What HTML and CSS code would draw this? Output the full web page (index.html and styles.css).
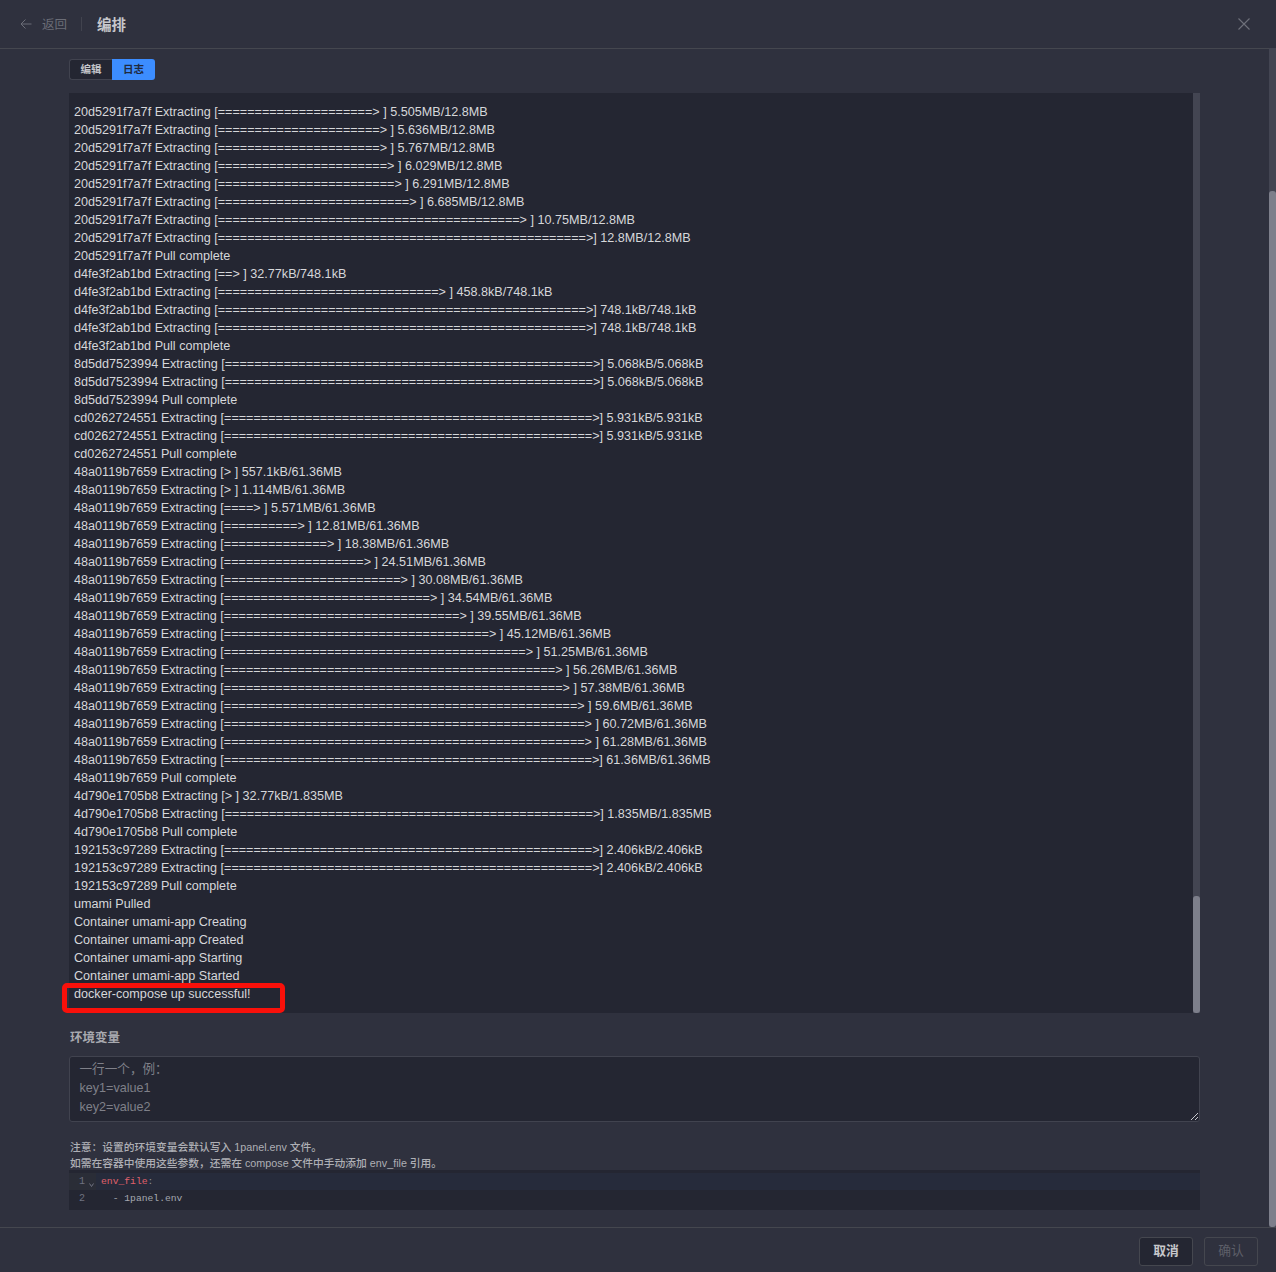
FILE: index.html
```html
<!DOCTYPE html>
<html lang="zh">
<head>
<meta charset="utf-8">
<title>编排</title>
<link rel="stylesheet" href="styles.css">
</head>
<body>
<div class="drawer">
  <header class="head">
    <svg class="back-icon" viewBox="0 0 12 12" width="12" height="12"><path d="M11.5 6H1M5.5 1.5 1 6l4.5 4.5" fill="none" stroke="currentColor" stroke-width="1"/></svg>
    <span class="back-text">返回</span>
    <span class="head-divider"></span>
    <span class="head-title">编排</span>
    <svg class="close-icon" viewBox="0 0 12 12" width="12" height="12"><path d="M.5.5l11 11M11.5.5l-11 11" fill="none" stroke="currentColor" stroke-width="1.1"/></svg>
  </header>
  <main class="body">
    <div class="tabs"><span class="tab">编辑</span><span class="tab tab-active">日志</span></div>
    <div class="log-wrap">
<pre class="log">20d5291f7a7f Extracting [=====================&gt; ] 5.505MB/12.8MB
20d5291f7a7f Extracting [======================&gt; ] 5.636MB/12.8MB
20d5291f7a7f Extracting [======================&gt; ] 5.767MB/12.8MB
20d5291f7a7f Extracting [=======================&gt; ] 6.029MB/12.8MB
20d5291f7a7f Extracting [========================&gt; ] 6.291MB/12.8MB
20d5291f7a7f Extracting [==========================&gt; ] 6.685MB/12.8MB
20d5291f7a7f Extracting [=========================================&gt; ] 10.75MB/12.8MB
20d5291f7a7f Extracting [==================================================&gt;] 12.8MB/12.8MB
20d5291f7a7f Pull complete
d4fe3f2ab1bd Extracting [==&gt; ] 32.77kB/748.1kB
d4fe3f2ab1bd Extracting [==============================&gt; ] 458.8kB/748.1kB
d4fe3f2ab1bd Extracting [==================================================&gt;] 748.1kB/748.1kB
d4fe3f2ab1bd Extracting [==================================================&gt;] 748.1kB/748.1kB
d4fe3f2ab1bd Pull complete
8d5dd7523994 Extracting [==================================================&gt;] 5.068kB/5.068kB
8d5dd7523994 Extracting [==================================================&gt;] 5.068kB/5.068kB
8d5dd7523994 Pull complete
cd0262724551 Extracting [==================================================&gt;] 5.931kB/5.931kB
cd0262724551 Extracting [==================================================&gt;] 5.931kB/5.931kB
cd0262724551 Pull complete
48a0119b7659 Extracting [&gt; ] 557.1kB/61.36MB
48a0119b7659 Extracting [&gt; ] 1.114MB/61.36MB
48a0119b7659 Extracting [====&gt; ] 5.571MB/61.36MB
48a0119b7659 Extracting [==========&gt; ] 12.81MB/61.36MB
48a0119b7659 Extracting [==============&gt; ] 18.38MB/61.36MB
48a0119b7659 Extracting [===================&gt; ] 24.51MB/61.36MB
48a0119b7659 Extracting [========================&gt; ] 30.08MB/61.36MB
48a0119b7659 Extracting [============================&gt; ] 34.54MB/61.36MB
48a0119b7659 Extracting [================================&gt; ] 39.55MB/61.36MB
48a0119b7659 Extracting [====================================&gt; ] 45.12MB/61.36MB
48a0119b7659 Extracting [=========================================&gt; ] 51.25MB/61.36MB
48a0119b7659 Extracting [=============================================&gt; ] 56.26MB/61.36MB
48a0119b7659 Extracting [==============================================&gt; ] 57.38MB/61.36MB
48a0119b7659 Extracting [================================================&gt; ] 59.6MB/61.36MB
48a0119b7659 Extracting [=================================================&gt; ] 60.72MB/61.36MB
48a0119b7659 Extracting [=================================================&gt; ] 61.28MB/61.36MB
48a0119b7659 Extracting [==================================================&gt;] 61.36MB/61.36MB
48a0119b7659 Pull complete
4d790e1705b8 Extracting [&gt; ] 32.77kB/1.835MB
4d790e1705b8 Extracting [==================================================&gt;] 1.835MB/1.835MB
4d790e1705b8 Pull complete
192153c97289 Extracting [==================================================&gt;] 2.406kB/2.406kB
192153c97289 Extracting [==================================================&gt;] 2.406kB/2.406kB
192153c97289 Pull complete
umami Pulled
Container umami-app Creating
Container umami-app Created
Container umami-app Starting
Container umami-app Started
docker-compose up successful!</pre>
      <div class="log-track"><div class="log-thumb"></div></div>
      <div class="highlight"></div>
    </div>
    <label class="field-label">环境变量</label>
    <div class="env-input">
      <div class="env-line">一行一个，例：</div>
      <div class="env-line">key1=value1</div>
      <div class="env-line">key2=value2</div>
      <svg class="resize-grip" viewBox="0 0 7 7" width="7" height="7"><path d="M0 7 7 0M4 7l3-3" fill="none" stroke="#c8c9ce" stroke-width="1"/></svg>
    </div>
    <div class="note">
      <div>注意：设置的环境变量会默认写入 1panel.env 文件。</div>
      <div>如需在容器中使用这些参数，还需在 compose 文件中手动添加 env_file 引用。</div>
    </div>
    <div class="code">
      <div class="code-line code-line-active"><span class="gutter gutter-active"><span class="num">1</span><svg class="fold" viewBox="0 0 5 4" width="5" height="4"><path d="M.5.5 2.5 3.5 4.5.5" fill="none" stroke="currentColor" stroke-width="1"/></svg></span><span class="code-key">env_file</span><span class="code-colon">:</span></div>
      <div class="code-line"><span class="gutter"><span class="num">2</span></span><span class="code-val">  - 1panel.env</span></div>
    </div>
  </main>
  <footer class="foot">
    <button class="btn">取消</button>
    <button class="btn btn-disabled">确认</button>
  </footer>
  <div class="page-track"><div class="page-thumb"></div></div>
</div>
</body>
</html>
```
FILE: styles.css
```css
* { box-sizing: border-box; }
html, body { margin: 0; padding: 0; }
body {
  background: #2f313e;
  font-family: "Liberation Sans", "Noto Sans CJK SC", sans-serif;
  overflow: hidden;
}
.drawer {
  position: relative;
  width: 1276px;
  height: 1272px;
  display: flex;
  flex-direction: column;
  background: #2f313e;
}
.head {
  height: 49px;
  flex: none;
  display: flex;
  align-items: center;
  padding: 0 26px 1px 20px;
  border-bottom: 1px solid #45474f;
}
.back-icon { color: #6b6d77; flex: none; }
.back-text { margin-left: 10px; font-size: 12.5px; color: #6b6d77; }
.head-divider { width: 1px; height: 14px; background: #41434e; margin: 0 15px 0 14px; }
.head-title { font-size: 14.5px; font-weight: 700; color: #c6c7cb; }
.close-icon { margin-left: auto; color: #6f717b; }
.body {
  flex: 1;
  min-height: 0;
  padding: 10px 76px 0 69px;
  display: flex;
  flex-direction: column;
}
.tabs { display: flex; height: 21px; flex: none; }
.tab {
  width: 43px;
  padding-bottom: 2px;
  display: flex;
  align-items: center;
  justify-content: center;
  font-size: 10.5px;
  font-weight: 700;
  color: #c2c3c8;
  background: #242632;
  border: 1px solid #41434f;
  border-right: 0;
  border-radius: 3px 0 0 3px;
}
.tab-active {
  background: #3c8dff;
  color: #1f2a3f;
  border: 0;
  border-radius: 0 3px 3px 0;
}
.log-wrap {
  position: relative;
  height: 920px;
  flex: none;
  margin-top: 13px;
  background: #242632;
}
.log {
  margin: 0;
  height: 100%;
  overflow: hidden;
  padding: 10px 12px 0 5px;
  font-family: "Liberation Sans", Arial, sans-serif;
  font-size: 12.62px;
  line-height: 18px;
  color: #d6d7da;
  white-space: pre-wrap;
}
.log-track {
  position: absolute;
  top: 0;
  right: 0;
  width: 7px;
  height: 100%;
  background: #434552;
}
.log-thumb {
  position: absolute;
  left: 0;
  bottom: 0;
  width: 100%;
  height: 117px;
  background: #7d7f8b;
  border-radius: 3px;
}
.highlight {
  position: absolute;
  left: -7px;
  top: 890px;
  width: 223px;
  height: 30px;
  border: 5px solid #f9100a;
  border-radius: 5px;
}
.field-label {
  margin-top: 17px;
  height: 16px;
  line-height: 16px;
  font-size: 12.5px;
  font-weight: 700;
  color: #a8a9af;
  padding-left: 1px;
}
.env-input {
  position: relative;
  height: 66px;
  margin-top: 10px;
  background: #242632;
  border: 1px solid #41434f;
  border-radius: 3px;
  padding: 3px 10px 0 9.5px;
}
.env-line {
  height: 19px;
  line-height: 19px;
  font-size: 12.6px;
  color: #7f8089;
}
.resize-grip { position: absolute; right: 1px; bottom: 1px; }
.note {
  margin-top: 17px;
  padding-left: 1px;
  font-size: 10.75px;
  font-weight: 500;
  line-height: 16px;
  color: #aeafb5;
}
.code {
  height: 40px;
  margin-top: -1px;
  padding-top: 3px;
  background: #242632;
  font-family: "Liberation Mono", monospace;
  font-size: 9.7px;
}
.code-line {
  height: 17px;
  line-height: 17px;
  display: flex;
  white-space: pre;
}
.code-line-active { background: #262b3b; }
.gutter {
  width: 27px;
  flex: none;
  position: relative;
  padding-left: 10px;
  margin-right: 5px;
  color: #6e7180;
}
.gutter-active { background: #2a2d37; }
.num { font-size: 10px; }
.fold {
  position: absolute;
  left: 20px;
  top: 10px;
  color: #6e7180;
}
.code-key { color: #e0616c; }
.code-colon { color: #8b8e99; }
.code-val { color: #a5a8b0; }
.foot {
  height: 45px;
  flex: none;
  border-top: 1px solid #45474f;
  display: flex;
  justify-content: flex-end;
  gap: 11px;
  padding: 9px 18px 0 0;
}
.btn {
  width: 54px;
  height: 29px;
  padding: 0 0 5px;
  background: #242632;
  border: 1px solid #45474f;
  border-radius: 3px;
  font-family: inherit;
  font-size: 12.75px;
  font-weight: 700;
  color: #c6c7cb;
}
.btn-disabled {
  background: #2f313e;
  color: #5d5f69;
  font-weight: 400;
}
.page-track {
  position: absolute;
  top: 48px;
  right: 0;
  width: 7px;
  height: 1179px;
  background: #434552;
}
.page-thumb {
  position: absolute;
  left: 0;
  bottom: 0;
  width: 100%;
  height: 1036px;
  background: #7d7f8b;
  border-radius: 3px;
}
```
